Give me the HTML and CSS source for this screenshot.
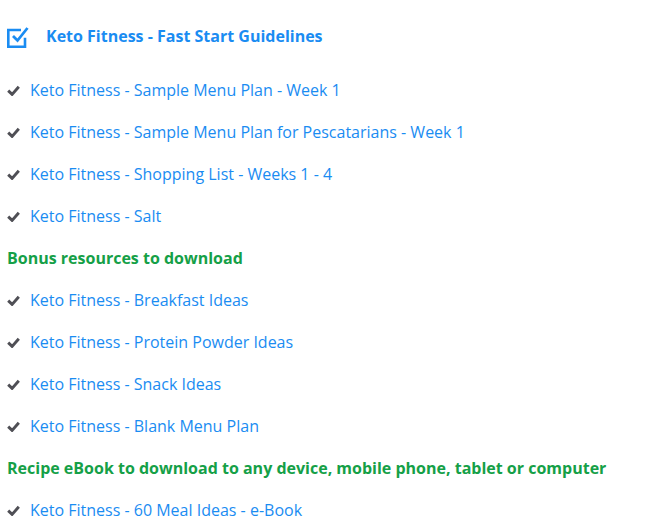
FILE: index.html
```html
<!DOCTYPE html>
<html lang="en">

<head>
    <meta charset="UTF-8">
    <meta name="viewport" content="width=device-width, initial-scale=1.0">
    <title>Keto Fitness - Fast Start</title>
    <link rel="stylesheet" href="styles.css">
</head>

<body>
    <div class="guide">
        <h1 class="guide-title">
            <svg class="box-icon" width="24" height="24" viewBox="0 0 24 24" aria-hidden="true">
                <path d="M15 6H2.3v16.7H19v-9" fill="none" stroke="#1a8cf2" stroke-width="2.6"/>
                <path d="M7 12l4.5 4.5L21.5 4" fill="none" stroke="#1a8cf2" stroke-width="2.8"/>
            </svg>
            <a href="#">Keto Fitness - Fast Start Guidelines</a>
        </h1>

        <ul class="files">
            <li><a href="#">Keto Fitness - Sample Menu Plan - Week 1</a></li>
            <li><a href="#">Keto Fitness - Sample Menu Plan for Pescatarians - Week 1</a></li>
            <li><a href="#">Keto Fitness - Shopping List - Weeks 1 - 4</a></li>
            <li><a href="#">Keto Fitness - Salt</a></li>
        </ul>

        <h2 class="section">Bonus resources to download</h2>

        <ul class="files">
            <li><a href="#">Keto Fitness - Breakfast Ideas</a></li>
            <li><a href="#">Keto Fitness - Protein Powder Ideas</a></li>
            <li><a href="#">Keto Fitness - Snack Ideas</a></li>
            <li><a href="#">Keto Fitness - Blank Menu Plan</a></li>
        </ul>

        <h2 class="section">Recipe eBook to download to any device, mobile phone, tablet or computer</h2>

        <ul class="files">
            <li><a href="#">Keto Fitness - 60 Meal Ideas - e-Book</a></li>
        </ul>
    </div>
</body>

</html>
```

FILE: styles.css
```css
* {
    margin: 0;
    padding: 0;
    box-sizing: border-box;
}

body {
    font-family: 'Open Sans', sans-serif;
    background-color: #fff;
    color: #333;
}

a {
    color: #1a8cf2;
    text-decoration: none;
}

.guide {
    padding: 22px 7px 0 7px;
}

.guide-title {
    display: flex;
    align-items: center;
    gap: 16px;
    height: 28px;
    margin-left: -1px;
    font-size: 16px;
    font-weight: 700;
    margin-bottom: 19px;
}

.box-icon {
    flex-shrink: 0;
}

.files {
    list-style: none;
}

.files li {
    display: flex;
    align-items: center;
    height: 42px;
    font-size: 16px;
}

.files li::before {
    content: "";
    width: 13px;
    height: 11px;
    margin-right: 10px;
    background: url("data:image/svg+xml;utf8,<svg xmlns='http://www.w3.org/2000/svg' viewBox='0 0 13 11'><path d='M1.2 5.6l3.9 3.8L11.8 1.8' fill='none' stroke='%234f4f55' stroke-width='2.9'/></svg>") no-repeat center;
}

.section {
    display: flex;
    align-items: center;
    height: 42px;
    font-size: 16px;
    font-weight: 700;
    color: #15a047;
}
```
